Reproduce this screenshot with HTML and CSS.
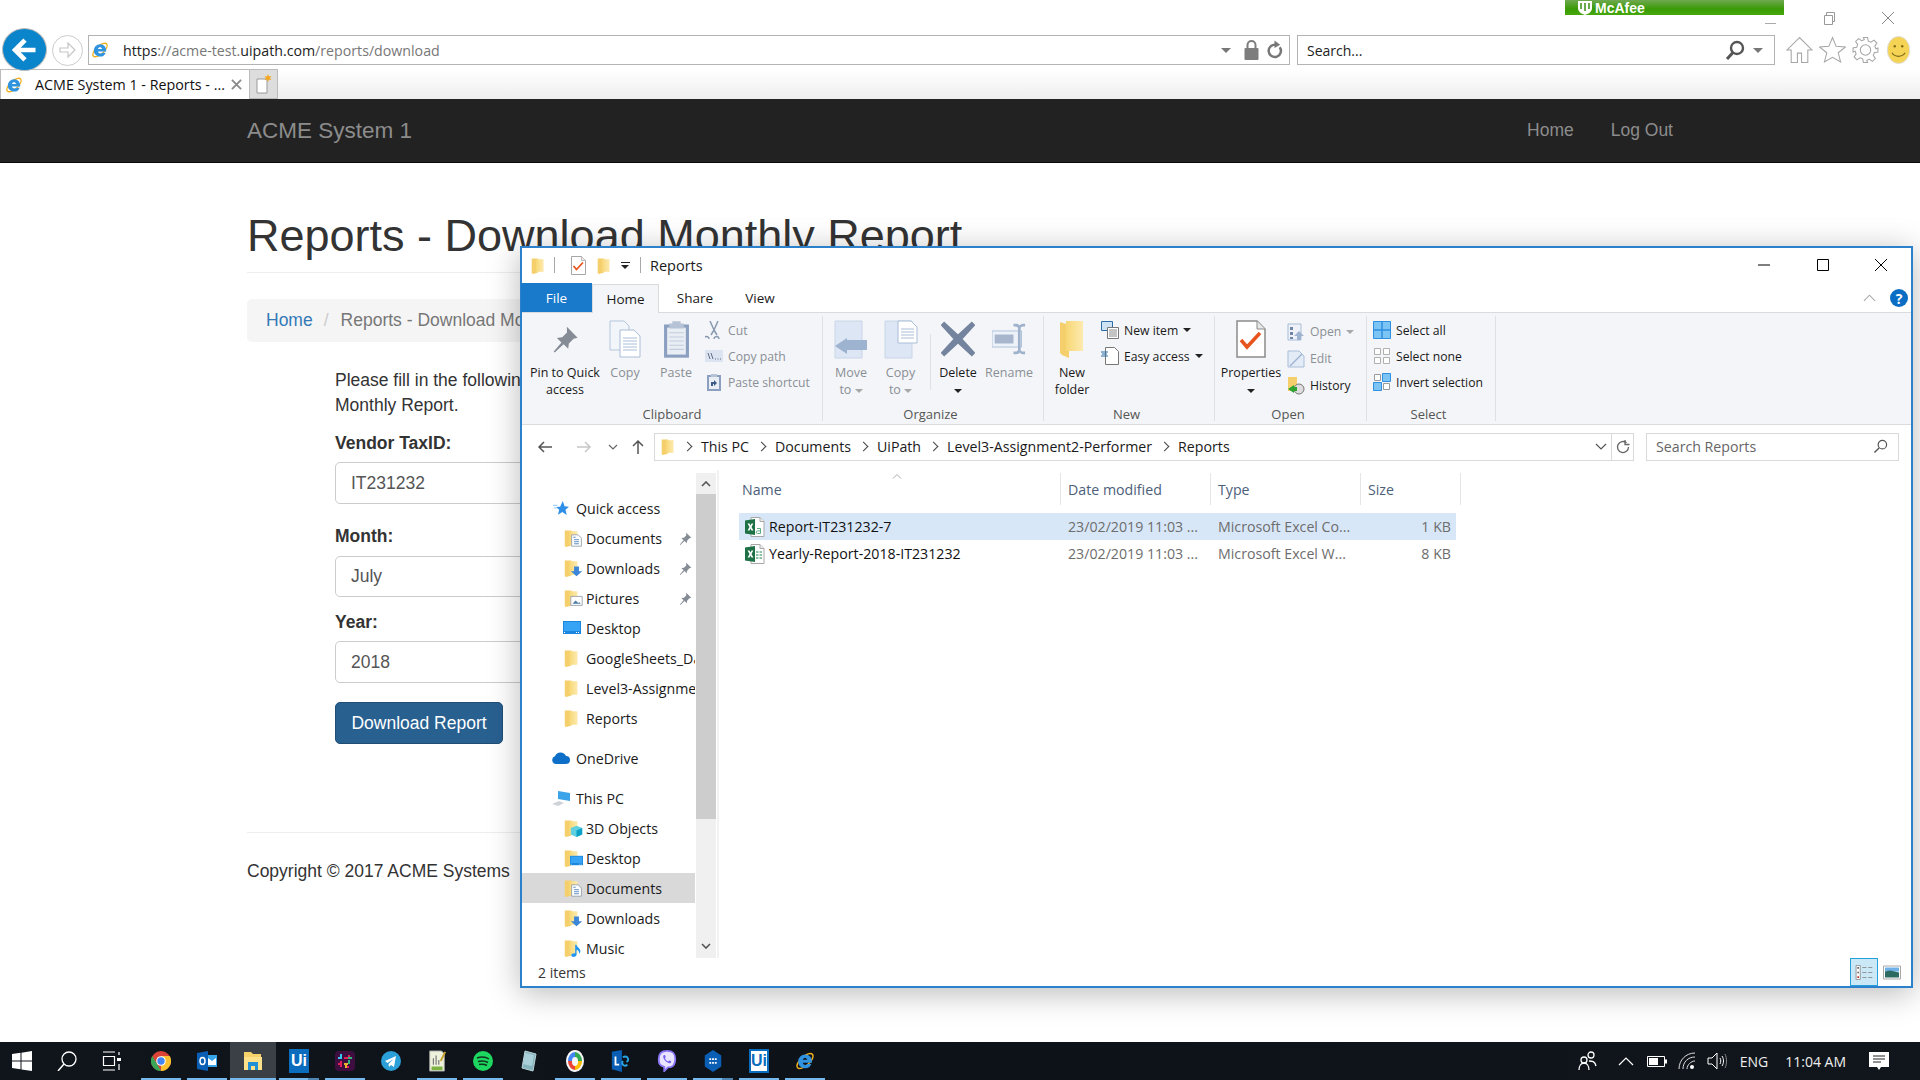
FILE: index.html
```html
<!DOCTYPE html>
<html lang="en">
<head>
<meta charset="utf-8">
<title>ACME System 1 - Reports</title>
<link rel="stylesheet" href="styles.css">
</head>
<body>
<svg class="defs" aria-hidden="true">
  <defs>
    <linearGradient id="fg" x1="0" x2="1" y1="0" y2="0"><stop offset="0" stop-color="#f7d774"/><stop offset="1" stop-color="#fdeab0"/></linearGradient>
    <symbol id="folder" viewBox="0 0 20 24"><path d="M1 2h9v20l-7 2-2-1z" fill="#f5cf6b"/><path d="M7 3h11v18H7z" fill="url(#fg)"/></symbol>
    <symbol id="ie" viewBox="0 0 20 20"><ellipse cx="10" cy="10" rx="10" ry="4.500" transform="rotate(-42 10 10)" fill="none" stroke="#f2b01e" stroke-width="1.400"/><path d="M10 3.500a6.800 6.800 0 0 0-6.800 6.800A6.800 6.800 0 0 0 16.300 13h-4c-.8 1.500-3.800 1.500-4.600-1.200h9.200C17.400 7 14.300 3.500 10 3.500zM7.800 8.800c.5-2.300 3.900-2.300 4.400 0z" fill="#2f93e0"/></symbol>
    <symbol id="pin" viewBox="0 0 20 20"><path d="M11 1l8 8-3 .8-3.500 3.500-.5 4-3.400-3.400L2 20l-.7-.7 5.700-6.700L3.600 9.200l4-.5L11.100 5.200z" fill="#858c95"/></symbol>
    <symbol id="xl1" viewBox="0 0 20 20"><path d="M6 .5h9l4 4v15H6z" fill="#fff" stroke="#a8a8a8"/><path d="M15 .5v4h4" fill="#eee" stroke="#a8a8a8"/><path d="M0 3.500L10 2v16L0 16.500z" fill="#1e7145"/><path d="M2.500 6.500h2l1 2 1-2h1.800L6.500 10l1.900 3.500H6.500l-1-2.100-1 2.100H2.600L4.500 10z" fill="#fff"/><path d="M12 11.500h3.500v5H12.500a1.300 1.300 0 0 1 0-2.600h3" fill="none" stroke="#5aa97f"/></symbol>
    <symbol id="xl2" viewBox="0 0 20 20"><path d="M6 .5h9l4 4v15H6z" fill="#fff" stroke="#a8a8a8"/><path d="M15 .5v4h4" fill="#eee" stroke="#a8a8a8"/><path d="M0 3.500L10 2v16L0 16.500z" fill="#1e7145"/><path d="M2.500 6.500h2l1 2 1-2h1.800L6.500 10l1.900 3.500H6.500l-1-2.100-1 2.100H2.600L4.500 10z" fill="#fff"/><path d="M11 7h2.500v2H11zM14.500 7H17v2h-2.500zM11 10h2.500v2H11zM14.500 10H17v2h-2.500zM11 13h2.500v2H11zM14.500 13H17v2h-2.500z" fill="#8dc4a4"/></symbol>
    <symbol id="pagecheck" viewBox="0 0 30 38"><path d="M1 1h20l8 8v28H1z" fill="#fff" stroke="#8a8a8a" stroke-width="1.500"/><path d="M21 1v8h8" fill="#e8e8e8" stroke="#8a8a8a"/><path d="M5 20l6 7 13-14" fill="none" stroke="#e8541e" stroke-width="3.500"/></symbol>
    <symbol id="doc" viewBox="0 0 16 16"><path d="M2 1h8l4 4v10H2z" fill="#fff" stroke="#8d98a6"/><path d="M5 7h6M5 9.500h6M5 12h6M4 4h3" stroke="#3f78b8"/></symbol>
    <symbol id="down" viewBox="0 0 16 16"><path d="M5 3h6v6h4l-7 6-7-6h4z" fill="#3b86d6"/></symbol>
    <symbol id="pict" viewBox="0 0 16 16"><path d="M1 3h14v11H1z" fill="#fff" stroke="#8d98a6"/><path d="M3 12l4-4 3 3 2-1 1 2z" fill="#4c7aa3"/></symbol>
    <symbol id="desk" viewBox="0 0 18 13"><path d="M0 0h18v13H0z" fill="#1a86de"/><path d="M1 1h16v9H1z" fill="#37a3f5"/><path d="M1 11h1v1H1zm14 0h1v1h-1zm-2 0h1v1h-1z" fill="#fff"/></symbol>
    <symbol id="cube" viewBox="0 0 16 16"><path d="M8 2l7 3v8l-7 3-7-3V5z" fill="#5fd0df"/><path d="M8 8l7-3v8l-7 3z" fill="#0aa1c8"/></symbol>
    <symbol id="note" viewBox="0 0 16 20"><path d="M6 1h2c.5 4 6 5 6 10 0 2-1 3-2 4 .5-3-1-5-4-6v8c0 2-3 3-5 3s-3-1.500-3-3 3-3 6-2.500z" fill="#2196f3"/></symbol>
    <symbol id="bigcopy" viewBox="0 0 32 38"><path d="M1 1h14l5 5v24H1z" fill="#f2f5fa" stroke="#b5c6dc"/><path d="M11 10h14l6 6v21H11z" fill="#fff" stroke="#a9bdd8"/><path d="M14 18h14M14 21h14M14 24h14M14 27h14M14 30h14" stroke="#a9bdd8"/></symbol>
    <symbol id="bigpaste" viewBox="0 0 26 38"><path d="M1 5h24v32H1z" fill="#8ba0c0"/><path d="M4 8h18v26H4z" fill="#e9edf4"/><path d="M9 2h8v2h3v5H6V4h3z" fill="#b6c3d6"/><path d="M6 13h14M6 17h14M6 21h14M6 25h14M6 29h14" stroke="#c3cddd"/></symbol>
    <symbol id="moveto" viewBox="0 0 34 38"><path d="M1 1h27v37H1z" fill="#dce6f4" stroke="#c8d6e8"/><path d="M11 20h22v10H11z" fill="#9db3d0" /><path d="M13 18v16L1 26z" fill="#9db3d0"/></symbol>
    <symbol id="copyto" viewBox="0 0 34 38"><path d="M1 1h27v37H1z" fill="#dce6f4" stroke="#c8d6e8"/><path d="M14 1h13l6 6v16H14z" fill="#fff" stroke="#a9bdd8"/><path d="M17 9h13M17 12h13M17 15h13M17 18h13" stroke="#a9bdd8"/></symbol>
    <symbol id="rename" viewBox="0 0 38 36"><path d="M0 9h33v18H0z" fill="#edf2f9" stroke="#a9bdd8"/><path d="M3 13h21v10H3z" fill="#a7b6cd"/><path d="M24 1h3c3 0 4 2 4 2s1-2 4-2h2v3h-2c-2 0-3 1-3 2v24c0 1 1 2 3 2h2v3h-2c-3 0-4-2-4-2s-1 2-4 2h-3v-3h2c2 0 3-1 3-2V6c0-1-1-2-3-2h-2z" fill="#9fb2cc"/></symbol>
    <symbol id="bigfolder" viewBox="0 0 24 38"><path d="M0 2l9 3v33l-7-3-2-2z" fill="#f5cf6b"/><path d="M6 1h17v30H6z" fill="url(#fg)"/></symbol>
    <symbol id="selall" viewBox="0 0 18 18"><path d="M.5.500h17v17H.500z" fill="#7cc4f4" stroke="#2f8fe0"/><path d="M9 0v18M0 9h18" stroke="#2f8fe0" stroke-width="1.500"/></symbol>
    <symbol id="selnone" viewBox="0 0 18 18"><path d="M1.500 1.500h6v6h-6zM10.500 1.500h6v6h-6zM1.500 10.500h6v6h-6zM10.500 10.500h6v6h-6z" fill="#fff" stroke="#b0b0b0"/></symbol>
    <symbol id="selinv" viewBox="0 0 18 18"><path d="M1.500 1.500h6v6h-6zM10.500 10.500h6v6h-6z" fill="#fff" stroke="#9a9a9a"/><path d="M9.500.500h8v8h-8zM.500 9.500h8v8h-8z" fill="#7cc4f4" stroke="#2f8fe0"/></symbol>
  </defs>
</svg>

<div class="screen">
  <header class="ie">
    <div class="ie-title">
      <div class="mcafee">
        <svg class="mcafee-shield" viewBox="0 0 14 14"><path d="M0 0h14v7c0 4-4 6-7 7-3-1-7-3-7-7z" fill="#fff"/><path d="M3 2v6M7 2v8M11 2v6" stroke="#3a8f12" stroke-width="1.500"/></svg>
        <span>McAfee</span>
      </div>
      <div class="ie-ctl">
        <svg class="ctl-i" viewBox="0 0 16 16"><path d="M3 13.500h11" stroke="#aaa" stroke-width="1"/></svg>
        <svg class="ctl-i" viewBox="0 0 16 16"><path d="M3.500 5.500h8v9h-8zM5.500 5V2.500h8v9h-2" fill="none" stroke="#999"/></svg>
        <svg class="ctl-i" viewBox="0 0 16 16"><path d="M2 2l12 12M14 2L2 14" stroke="#888" stroke-width="1"/></svg>
      </div>
    </div>
    <div class="ie-nav">
      <div class="back-btn"><svg viewBox="0 0 24 24"><path d="M3 12h18M12 3.500L3.500 12l8.500 8.500" fill="none" stroke="#fff" stroke-width="4"/></svg></div>
      <div class="fwd-btn"><svg viewBox="0 0 20 20"><path d="M2 8h8V3l7 7-7 7v-5H2z" fill="none" stroke="#c6c6c6" stroke-width="1.200"/></svg></div>
      <div class="addr">
        <svg class="i18 addr-ie"><use href="#ie"/></svg>
        <span class="url"><b>https</b>://acme-test.<b>uipath.com</b>/reports/download</span>
        <span class="caret-g"></span>
        <svg class="addr-lock" viewBox="0 0 14 20"><path d="M3 8V5a4 4 0 0 1 8 0v3" fill="none" stroke="#7d7d7d" stroke-width="2"/><rect y="8" width="14" height="12" rx="1" fill="#7d7d7d"/></svg>
        <svg class="addr-ref" viewBox="0 0 18 20"><path d="M14.500 7a6.500 6.500 0 1 1-4-2.500" fill="none" stroke="#777" stroke-width="2.600"/><path d="M9 0l6 4.500L9 8z" fill="#777"/></svg>
      </div>
      <div class="srch">
        <span class="srch-t">Search...</span>
        <svg class="srch-mag" viewBox="0 0 20 20"><circle cx="12" cy="8" r="6" fill="none" stroke="#555" stroke-width="2.400"/><path d="M8 12.500L2 19" stroke="#555" stroke-width="3"/></svg>
        <span class="caret-g"></span>
      </div>
      <div class="ie-tools">
        <svg class="tool" viewBox="0 0 26 26"><path d="M13 1L1 13h4v12h6v-9h4v9h6V13h4z" fill="none" stroke="#a5a5a5"/></svg>
        <svg class="tool" viewBox="0 0 26 26"><path d="M13 1l3.500 8.500 9 .6-7 5.600 2.300 8.800L13 20l-7.800 4.500 2.300-8.800-7-5.600 9-.6z" fill="none" stroke="#a5a5a5"/></svg>
        <svg class="tool" viewBox="0 0 26 26"><circle cx="13" cy="13" r="5" fill="none" stroke="#a5a5a5"/><path d="M11 1h4l.7 3.500 2.500 1 3-2 2.800 2.800-2 3 1 2.500L25 11v4l-3.500.7-1 2.500 2 3-2.800 2.800-3-2-2.500 1L15 25h-4l-.7-3.500-2.500-1-3 2-2.800-2.800 2-3-1-2.500L1 15v-4l3.500-.7 1-2.500-2-3 2.800-2.800 3 2 2.500-1z" fill="none" stroke="#a5a5a5"/></svg>
        <svg class="tool" viewBox="0 0 26 30"><ellipse cx="13" cy="15" rx="12" ry="14.500" fill="#f5d455" stroke="#ddd"/><circle cx="9" cy="11" r="1.300" fill="#7c6a1a"/><circle cx="17" cy="11" r="1.300" fill="#7c6a1a"/><path d="M6 18c3 5 11 5 14 0" fill="none" stroke="#7c6a1a" stroke-width="1.300"/></svg>
      </div>
    </div>
    <div class="ie-tabs">
      <div class="ie-tab">
        <svg class="i18"><use href="#ie"/></svg>
        <span class="ie-tab-t">ACME System 1 - Reports - ...</span>
        <svg class="ie-tab-x" viewBox="0 0 12 12"><path d="M1 1l10 10M11 1L1 11" stroke="#8a8a8a" stroke-width="2"/></svg>
      </div>
      <div class="ie-new"><svg viewBox="0 0 16 20"><path d="M1 5h10v14H1z" fill="#fff" stroke="#999"/><path d="M12 0l1 2.500 2.500-.5-1.500 2 1.500 2-2.500-.5-1 2.500-1-2.500-2.500.5 1.500-2-1.500-2 2.500.5z" fill="#f4a61d"/></svg></div>
    </div>
  </header>

  <nav class="navbar">
    <div class="brand">ACME System 1</div>
    <div class="nav-links"><a>Home</a><a>Log Out</a></div>
  </nav>

  <main class="page">
    <h1>Reports - Download Monthly Report</h1>
    <div class="crumb"><a>Home</a><i>/</i><span>Reports - Download Monthly Report</span></div>
    <form class="form">
      <p>Please fill in the following details to download the<br>Monthly Report.</p>
      <label class="l1">Vendor TaxID:</label>
      <div class="input h42 m7">IT231232</div>
      <label class="l2">Month:</label>
      <div class="input h41">July</div>
      <label class="l3">Year:</label>
      <div class="input h42 m7">2018</div>
      <div class="btn">Download Report</div>
    </form>
    <hr>
    <footer>Copyright © 2017 ACME Systems</footer>
  </main>

  <section class="win">
    <div class="w-title">
      <svg class="qa-f"><use href="#folder"/></svg>
      <span class="qa-sep"></span>
      <svg class="qa-c"><use href="#pagecheck"/></svg>
      <svg class="qa-f qa-f2"><use href="#folder"/></svg>
      <span class="qa-d"></span>
      <span class="qa-sep qa-sep2"></span>
      <span class="w-name">Reports</span>
      <div class="w-ctl">
        <svg viewBox="0 0 14 14"><path d="M1 7h12" stroke="#000" stroke-width="1"/></svg>
        <svg viewBox="0 0 14 14"><path d="M1.500 1.500h11v11h-11z" fill="none" stroke="#000" stroke-width="1"/></svg>
        <svg viewBox="0 0 14 14"><path d="M1 1l12 12M13 1L1 13" stroke="#000" stroke-width="1"/></svg>
      </div>
    </div>
    <div class="w-tabs">
      <span class="tab-file">File</span>
      <span class="tab-home">Home</span>
      <span class="tab-share">Share</span>
      <span class="tab-view">View</span>
      <svg class="rib-up" viewBox="0 0 14 8"><path d="M1 7l6-6 6 6" fill="none" stroke="#aaa" stroke-width="1.200"/></svg>
      <span class="help">?</span>
    </div>
    <div class="ribbon">
      <div class="grp g-clip">
        <div class="grp-body">
          <div class="big w70"><svg class="ic-pin"><use href="#pin"/></svg><span>Pin to Quick<br>access</span></div>
          <div class="big w50 dim"><svg class="ic30"><use href="#bigcopy"/></svg><span>Copy</span></div>
          <div class="big w52 dim"><svg class="ic26"><use href="#bigpaste"/></svg><span>Paste</span></div>
          <div class="smalls dim">
            <div class="sm"><svg viewBox="0 0 14 18"><path d="M3 0l4 9 4-9M2 18a2.500 2.500 0 1 1 0-.1zM12 18a2.500 2.500 0 1 1 0-.1zM7 9l-3 5M7 9l3 5" fill="none" stroke="#8a9ab0" stroke-width="1.500"/></svg>Cut</div>
            <div class="sm"><svg viewBox="0 0 18 12"><path d="M0 0h18v12H0z" fill="#dbe4f0"/><path d="M3 3l2 6M6 3l2 6M10 9h1M12.500 9h1M15 9h1" stroke="#5e6f85"/></svg>Copy path</div>
            <div class="sm"><svg viewBox="0 0 14 18"><path d="M0 2h14v16H0z" fill="#8ba0c0"/><path d="M2 4h10v12H2z" fill="#e9edf4"/><path d="M4 1h6v3H4z" fill="#b6c3d6"/><path d="M4 13V9h3V7l3 3-3 3v-2H6v2z" fill="#3c5c86"/></svg>Paste shortcut</div>
          </div>
        </div>
        <div class="grp-l">Clipboard</div>
      </div>
      <div class="grp g-org">
        <div class="grp-body">
          <div class="big w50 dim"><svg class="ic34"><use href="#moveto"/></svg><span>Move<br>to <em class="dn"></em></span></div>
          <div class="big w49 dim"><svg class="ic34"><use href="#copyto"/></svg><span>Copy<br>to <em class="dn"></em></span></div>
          <span class="vsep"></span>
          <div class="big w52"><svg class="ic34" viewBox="0 0 32 32"><path d="M3 1l13 12L29 1l2 2-12 13 12 13-2 2-13-12L3 31l-2-2 12-13L1 3z" fill="#74849f" stroke="#74849f" stroke-width="2"/></svg><span>Delete<br><em class="dn dk"></em></span></div>
          <div class="big w50 dim"><svg class="ic34"><use href="#rename"/></svg><span>Rename</span></div>
        </div>
        <div class="grp-l">Organize</div>
      </div>
      <div class="grp g-new">
        <div class="grp-body">
          <div class="big w48"><svg class="ic-fold"><use href="#bigfolder"/></svg><span>New<br>folder</span></div>
          <div class="smalls">
            <div class="sm"><svg viewBox="0 0 18 18"><path d="M.5.500h11v9H.500z" fill="#cfe2f3" stroke="#2b6ea8"/><path d="M6.500 6.500h11v11h-11z" fill="#fff" stroke="#777"/><path d="M8 9h8M8 11h8M8 13h8M8 15h8" stroke="#888"/></svg>New item <em class="dn dk"></em></div>
            <div class="sm"><svg viewBox="0 0 18 18"><path d="M4.500.500h9l4 4v13h-13z" fill="#fff" stroke="#777"/><path d="M0 5h7M1 7h5M0 9h7" stroke="#2b6ea8"/></svg>Easy access <em class="dn dk"></em></div>
          </div>
        </div>
        <div class="grp-l">New</div>
      </div>
      <div class="grp g-open">
        <div class="grp-body">
          <div class="big w64"><svg class="ic-chk"><use href="#pagecheck"/></svg><span>Properties<br><em class="dn dk"></em></span></div>
          <div class="smalls s-open">
            <div class="sm dim"><svg viewBox="0 0 18 18"><path d="M1 1h13v16H1z" fill="#eef2f8" stroke="#a9bdd8"/><path d="M3 4h3v3H3zM3 9h3v3H3zM3 14h3v2H3z" fill="#6f86a6"/><path d="M12 8l5 5h-3v4h-4v-4H7z" fill="#9db3d0"/></svg>Open <em class="dn"></em></div>
            <div class="sm dim"><svg viewBox="0 0 18 18"><path d="M1 1h11l5 5v11H1z" fill="#e3ebf6" stroke="#a9bdd8"/><path d="M3 16L15 4" stroke="#9db3d0" stroke-width="1.500"/></svg>Edit</div>
            <div class="sm"><svg viewBox="0 0 18 18"><path d="M1 0h9v14H1z" fill="#f5cf6b"/><circle cx="12" cy="12" r="5" fill="#ddd" stroke="#777"/><path d="M1 12l6-4v2h3v4H7v2z" fill="#2fa32f"/></svg>History</div>
          </div>
        </div>
        <div class="grp-l">Open</div>
      </div>
      <div class="grp g-sel">
        <div class="grp-body">
          <div class="smalls">
            <div class="sm"><svg viewBox="0 0 18 18"><use href="#selall"/></svg>Select all</div>
            <div class="sm"><svg viewBox="0 0 18 18"><use href="#selnone"/></svg>Select none</div>
            <div class="sm"><svg viewBox="0 0 18 18"><use href="#selinv"/></svg>Invert selection</div>
          </div>
        </div>
        <div class="grp-l">Select</div>
      </div>
    </div>
    <div class="w-addr">
      <svg class="nv n1" viewBox="0 0 16 14"><path d="M15 7H2M7 2L2 7l5 5" fill="none" stroke="#555" stroke-width="1.500"/></svg>
      <svg class="nv n2" viewBox="0 0 16 14"><path d="M1 7h13M9 2l5 5-5 5" fill="none" stroke="#c8c8c8" stroke-width="1.500"/></svg>
      <svg class="nv n3" viewBox="0 0 10 6"><path d="M1 1l4 4 4-4" fill="none" stroke="#666" stroke-width="1.200"/></svg>
      <svg class="nv n4" viewBox="0 0 14 16"><path d="M7 15V2M2 7l5-5 5 5" fill="none" stroke="#555" stroke-width="1.500"/></svg>
      <div class="path">
        <svg class="pf"><use href="#folder"/></svg>
        <span class="cv"></span><span>This PC</span>
        <span class="cv"></span><span>Documents</span>
        <span class="cv"></span><span>UiPath</span>
        <span class="cv"></span><span>Level3-Assignment2-Performer</span>
        <span class="cv"></span><span>Reports</span>
        <svg class="path-dd" viewBox="0 0 12 7"><path d="M1 1l5 5 5-5" fill="none" stroke="#555" stroke-width="1.200"/></svg>
        <span class="path-ref"><svg viewBox="0 0 16 16"><path d="M13.500 8a5.500 5.500 0 1 1-2-4.200" fill="none" stroke="#666" stroke-width="1.300"/><path d="M10 1v4.500h4.500" fill="none" stroke="#666" stroke-width="1.300"/></svg></span>
      </div>
      <div class="w-srch"><span>Search Reports</span><svg viewBox="0 0 16 16"><circle cx="10" cy="6" r="4.500" fill="none" stroke="#555" stroke-width="1.300"/><path d="M6.500 9.500L1.500 14.500" stroke="#555" stroke-width="1.500"/></svg></div>
    </div>
    <div class="w-body">
      <aside class="tree">
        <div class="rows">
          <div class="r top"><svg class="ti" viewBox="0 0 18 18"><path d="M11 1l2 6 5 .5-4 3.500 1.500 6-5-3.500-5 3L7 11 3.500 8l4.500-.500z" fill="#2f8fe8"/><path d="M0 6h5M1 9h3" stroke="#7fc0f4"/></svg>Quick access</div>
          <div class="r"><span class="fi"><svg class="f"><use href="#folder"/></svg><svg class="o"><use href="#doc"/></svg></span>Documents<svg class="rp"><use href="#pin"/></svg></div>
          <div class="r"><span class="fi"><svg class="f"><use href="#folder"/></svg><svg class="o"><use href="#down"/></svg></span>Downloads<svg class="rp"><use href="#pin"/></svg></div>
          <div class="r"><span class="fi"><svg class="f"><use href="#folder"/></svg><svg class="o"><use href="#pict"/></svg></span>Pictures<svg class="rp"><use href="#pin"/></svg></div>
          <div class="r"><span class="fi"><svg class="dsk"><use href="#desk"/></svg></span>Desktop</div>
          <div class="r"><span class="fi"><svg class="f"><use href="#folder"/></svg></span>GoogleSheets_Data</div>
          <div class="r"><span class="fi"><svg class="f"><use href="#folder"/></svg></span>Level3-Assignment2</div>
          <div class="r"><span class="fi"><svg class="f"><use href="#folder"/></svg></span>Reports</div>
          <div class="r top gap"><svg class="ti" viewBox="0 0 18 12"><path d="M4 12a4 4 0 0 1-1-7.800A6 6 0 0 1 14 4a4 4 0 0 1 0 8z" fill="#0e6fc8"/></svg>OneDrive</div>
          <div class="r top gap"><svg class="ti" viewBox="0 0 18 16"><path d="M6 1l12 2v8L6 9z" fill="#3ba3ea"/><path d="M0 14l7-3 5 2-6 3z" fill="#cfd3d8"/></svg>This PC</div>
          <div class="r"><span class="fi"><svg class="f"><use href="#folder"/></svg><svg class="o"><use href="#cube"/></svg></span>3D Objects</div>
          <div class="r"><span class="fi"><svg class="f"><use href="#folder"/></svg><svg class="o"><use href="#desk"/></svg></span>Desktop</div>
          <div class="r sel"><span class="fi"><svg class="f"><use href="#folder"/></svg><svg class="o"><use href="#doc"/></svg></span>Documents</div>
          <div class="r"><span class="fi"><svg class="f"><use href="#folder"/></svg><svg class="o"><use href="#down"/></svg></span>Downloads</div>
          <div class="r"><span class="fi"><svg class="f"><use href="#folder"/></svg><svg class="o"><use href="#note"/></svg></span>Music</div>
        </div>
        <div class="sbar">
          <div class="sb-up"><svg viewBox="0 0 10 6"><path d="M1 5l4-4 4 4" fill="none" stroke="#555" stroke-width="1.600"/></svg></div>
          <div class="sb-th"></div>
          <div class="sb-dn"><svg viewBox="0 0 10 6"><path d="M1 1l4 4 4-4" fill="none" stroke="#555" stroke-width="1.600"/></svg></div>
        </div>
      </aside>
      <div class="list">
        <div class="hdr">
          <span class="c1">Name<svg class="sort" viewBox="0 0 10 5"><path d="M1 4.500L5 .5l4 4" fill="none" stroke="#aaa"/></svg></span>
          <span class="c2">Date modified</span>
          <span class="c3">Type</span>
          <span class="c4">Size</span>
        </div>
        <div class="row on">
          <span class="n"><svg class="xi"><use href="#xl1"/></svg><b>Report-IT231232-7</b></span>
          <span class="d">23/02/2019 11:03 ...</span>
          <span class="t">Microsoft Excel Co...</span>
          <span class="s">1 KB</span>
        </div>
        <div class="row">
          <span class="n"><svg class="xi"><use href="#xl2"/></svg><b>Yearly-Report-2018-IT231232</b></span>
          <span class="d">23/02/2019 11:03 ...</span>
          <span class="t">Microsoft Excel W...</span>
          <span class="s">8 KB</span>
        </div>
      </div>
    </div>
    <div class="w-status">
      <span>2 items</span>
      <div class="views">
        <span class="v on"><svg viewBox="0 0 20 18"><path d="M.5.500h5v17h-5z" fill="#fff" stroke="#888"/><path d="M2 2.500h2v2H2zM2 8h2v2H2z" fill="#666"/><path d="M2 13.500h2v2H2z" fill="#c0392b"/><path d="M8 3h5M15 3h5M8 9h5M15 9h5M8 15h5M15 15h5" stroke="#888"/></svg></span>
        <span class="v"><svg viewBox="0 0 18 14"><path d="M.5.500h17v13H.500z" fill="#fff" stroke="#a8a8a8"/><path d="M2 2h14v4H2z" fill="#6fb0e8"/><path d="M2 6l5-1 5 1 4 1v5H2z" fill="#2d6b62"/></svg></span>
      </div>
    </div>
  </section>

  <footer class="taskbar">
    <div class="tb-left">
      <span class="tb"><svg viewBox="0 0 20 20"><path d="M0 3l8.500-1.200V9.500H0zM9.500 1.700L20 0v9.500H9.500zM0 10.500h8.500v7.700L0 17zM9.500 10.500H20V20L9.500 18.400z" fill="#fff"/></svg></span>
      <span class="tb"><svg viewBox="0 0 20 20"><circle cx="12" cy="8" r="7" fill="none" stroke="#fff" stroke-width="1.300"/><path d="M7 13l-6 7" stroke="#fff" stroke-width="1.500"/></svg></span>
      <span class="tb"><svg viewBox="0 0 20 20"><path d="M1 1h12M1 19h12M1.500 5.500h11v9h-11zM17 1v3M17 7v3M17 13v6" fill="none" stroke="#fff" stroke-width="1.200"/><rect x="15" y="7" width="4" height="3" fill="#fff"/></svg></span>
      <span class="tb app run"><svg viewBox="0 0 20 20"><circle cx="10" cy="10" r="10" fill="#db4437"/><path d="M10 20a10 10 0 0 0 8.700-15H10z" fill="#fbc02d"/><path d="M1.300 5L6 13l4 7A10 10 0 0 1 1.300 5z" fill="#3aa757"/><circle cx="10" cy="10" r="4.800" fill="#fff"/><circle cx="10" cy="10" r="3.700" fill="#4285f4"/></svg></span>
      <span class="tb app run"><svg viewBox="0 0 20 20"><path d="M9 4h11v12H9z" fill="#37a3e8"/><path d="M11 7l4 3 4-3v7h-8z" fill="#fff"/><path d="M0 2l11-2v20L0 18z" fill="#0a5fb4"/><ellipse cx="5.500" cy="10" rx="2.500" ry="3.500" fill="none" stroke="#fff" stroke-width="1.500"/></svg></span>
      <span class="tb app run act"><svg viewBox="0 0 20 20"><path d="M1 1h7l2 2h8v5H1z" fill="#f6d16a"/><path d="M1 6h18v13H1z" fill="#fde08a"/><path d="M5 11h10v8h-3v-4H8v4H5z" fill="#1f8fd6"/></svg></span>
      <span class="tb app run st"><span class="ui ui-b">Ui</span></span>
      <span class="tb app run"><svg viewBox="0 0 20 20"><rect width="20" height="20" rx="4" fill="#3f0e40"/><path d="M6 3v4M14 9v4M3 13h4M9 7h4M6 10v6M14 4v3M3 7h3M11 16h3" stroke="#e01e5a" stroke-width="2"/><path d="M14 9v4M13 7h4" stroke="#2eb67d" stroke-width="2"/><path d="M9 13h4M11 13v4" stroke="#ecb22e" stroke-width="2"/><path d="M6 3v3M3 7h4" stroke="#36c5f0" stroke-width="2"/></svg></span>
      <span class="tb app"><svg viewBox="0 0 20 20"><circle cx="10" cy="10" r="10" fill="#2a9fd8"/><path d="M4 10l11-5-2 11-3-2-2 2-.5-3 5-5-6 4z" fill="#fff"/></svg></span>
      <span class="tb app run"><svg viewBox="0 0 20 24"><path d="M2 1h13l3 3v19H2z" fill="#eef2dc" stroke="#999"/><path d="M4 18h12v4H4z" fill="#7cb342"/><path d="M6 16V9M9 16V6M12 16v-5" stroke="#555"/><path d="M14 12L19 2" stroke="#c6a02a" stroke-width="2"/></svg></span>
      <span class="tb app run"><svg viewBox="0 0 20 20"><circle cx="10" cy="10" r="10" fill="#1ed760"/><path d="M4 7c4-1.500 9-1 12 1M5 10.500c3.500-1 7-.7 10 1M6 13.500c3-.7 5.500-.5 8 1" fill="none" stroke="#10331c" stroke-width="1.500"/></svg></span>
      <span class="tb app"><svg viewBox="0 0 20 22"><path d="M6 1l11 3-3 17-11-3z" fill="#86b4bd" stroke="#b9d3d9"/><path d="M6 3l9 2-2 11-9-2z" fill="#a9d0d8"/></svg></span>
      <span class="tb app run"><svg viewBox="0 0 20 22"><ellipse cx="10" cy="11" rx="9" ry="11" fill="#f6f6f6"/><path d="M10 2a7 9 0 0 1 7 9h-4a3 4 0 0 0-3-4z" fill="#34a853"/><path d="M17 11a7 9 0 0 1-7 9v-4a3 4 0 0 0 3-5z" fill="#fbbc04"/><path d="M10 20a7 9 0 0 1-7-9h4a3 4 0 0 0 3 5z" fill="#ea4335"/><path d="M3 11a7 9 0 0 1 7-9v5a3 4 0 0 0-3 4z" fill="#4285f4"/></svg></span>
      <span class="tb app run"><svg viewBox="0 0 20 24"><path d="M0 2l11-2v24L0 21z" fill="#0a5fb4"/><path d="M3 7h2v8h3v2H3z" fill="#fff"/><path d="M12 8c5-3 8 3 4 5M17 16c-4 3-7-1-5-4" fill="none" stroke="#28a8ea" stroke-width="2"/></svg></span>
      <span class="tb app run"><svg viewBox="0 0 20 24"><path d="M10 1c7 0 9 3 9 9s-2 9-8 9l-4 4v-4.500C2 17 1 15 1 10s2-9 9-9z" fill="#e9e4ff" stroke="#8a75f5" stroke-width="2"/><path d="M6 6c1-1 2-1 2.500 1 .3 1-1 1.500-.5 2.500s2 2.500 3 2.700c1 0 1-1.200 2-.8 2 .6 2 2 .8 2.800-2 1.300-9-3.500-7.800-8.200z" fill="#7360f2"/></svg></span>
      <span class="tb app run st"><svg viewBox="0 0 20 24"><path d="M10 0l9 6v12l-9 6-9-6V6z" fill="#0a5fb4"/><path d="M6 9h2v2H6zM9 9h2v2H9zM12 9h2v2h-2zM6 13h2v2H6zM9 13h2v2H9zM12 13h2v2h-2z" fill="#fff"/></svg></span>
      <span class="tb app run"><span class="ui ui-w">Ui</span></span>
      <span class="tb app run"><svg viewBox="0 0 20 20"><use href="#ie"/></svg></span>
    </div>
    <div class="tray">
      <svg class="ty t-ppl" viewBox="0 0 20 20"><circle cx="13" cy="4" r="3" fill="none" stroke="#fff" stroke-width="1.300"/><circle cx="6" cy="9" r="3" fill="none" stroke="#fff" stroke-width="1.300"/><path d="M1 19c0-4 2-7 5-7s5 3 5 7M11 10c3 0 6 0 7 5" fill="none" stroke="#fff" stroke-width="1.300"/></svg>
      <svg class="ty t-chev" viewBox="0 0 16 9"><path d="M1 8l7-7 7 7" fill="none" stroke="#fff" stroke-width="1.200"/></svg>
      <svg class="ty t-bat" viewBox="0 0 20 11"><path d="M.5.500h17v10h-17z" fill="none" stroke="#fff"/><rect x="2" y="2" width="9" height="7" fill="#fff"/><rect x="18" y="3.500" width="2" height="4" fill="#fff"/></svg>
      <svg class="ty t-wifi" viewBox="0 0 18 18"><path d="M1 17C1 8 8 1 17 1M5 17C5 10 10 5 17 5M9 17c0-4 4-8 8-8" fill="none" stroke="#ddd"/><circle cx="14" cy="15" r="2" fill="#fff"/></svg>
      <svg class="ty t-vol" viewBox="0 0 20 18"><path d="M1 6h4l5-5v16l-5-5H1z" fill="none" stroke="#fff"/><path d="M13 6c1 2 1 4 0 6M15 4c2 3 2 7 0 10" fill="none" stroke="#fff"/><path d="M18 2c2 4 2 10 0 14" fill="none" stroke="#888"/></svg>
      <span class="eng">ENG</span>
      <span class="time">11:04 AM</span>
      <svg class="ty t-note" viewBox="0 0 20 18"><path d="M0 0h20v15h-8l-2 3-2-3H0z" fill="#fff"/><path d="M4 4h12M4 7h12M4 10h8" stroke="#222" stroke-width="1"/></svg>
    </div>
  </footer>
</div>
</body>
</html>
```

FILE: styles.css
```css
* { box-sizing: border-box; }
html, body { margin: 0; padding: 0; height: 100%; background: #fff; }
body { overflow: hidden; font-family: "Liberation Sans", Arial, sans-serif; color: #333; }
svg { display: block; flex: none; }
em { font-style: normal; }
.defs { position: absolute; width: 0; height: 0; }
.screen { position: relative; width: 1920px; height: 1080px; display: flex; flex-direction: column; overflow: hidden; }

/* IE chrome */
.ie { height: 99px; flex: none; position: relative; font-family: "Open Sans", "Noto Sans", sans-serif; }
.ie-title { height: 35px; display: flex; justify-content: flex-end; }
.mcafee { width: 219px; height: 15px; margin-right: 11px; background: linear-gradient(#6fa850, #3a9b06 60%, #46a80d); display: flex; align-items: center; padding-left: 13px; gap: 3px; color: #fff; font: bold 14px "Liberation Sans", sans-serif; overflow: hidden; }
.mcafee-shield { width: 14px; height: 14px; }
.ie-ctl { display: flex; gap: 43px; padding: 10px 24px 0 0; margin-left: -33px; }
.ctl-i { width: 16px; height: 16px; }
.ie-nav { height: 34px; display: flex; align-items: center; padding-left: 52px; padding-bottom: 4px; }
.back-btn { position: absolute; left: 2px; top: 28px; width: 45px; height: 43px; border-radius: 50%; background: #0a84ca; border: 1px solid #bcbcbc; display: flex; align-items: center; justify-content: center; }
.back-btn svg { width: 28px; height: 28px; }
.fwd-btn { width: 31px; height: 31px; border-radius: 50%; border: 1px solid #ccc; display: flex; align-items: center; justify-content: center; margin-right: 5px; }
.fwd-btn svg { width: 20px; height: 20px; }
.addr { width: 1202px; height: 30px; border: 1px solid #b3b3b3; display: flex; align-items: center; padding-left: 2px; font-size: 14.200px; }
.i18 { width: 18px; height: 18px; }
.addr-ie { margin-right: 14px; }
.url { color: #777; flex: 1; }
.url b { font-weight: 400; color: #222; }
.caret-g { width: 0; height: 0; border-left: 5px solid transparent; border-right: 5px solid transparent; border-top: 5px solid #777; flex: none; }
.addr-lock { width: 15px; height: 20px; margin: 0 7px 0 13px; }
.addr-ref { width: 17px; height: 20px; margin-right: 6px; }
.srch { width: 478px; height: 30px; margin-left: 7px; border: 1px solid #b3b3b3; display: flex; align-items: center; padding-left: 9px; font-size: 14px; color: #222; }
.srch-t { flex: 1; }
.srch-mag { width: 20px; height: 20px; margin-right: 8px; }
.srch .caret-g { margin-right: 11px; }
.ie-tools { display: flex; align-items: center; gap: 6px; margin-left: 11px; }
.tool { width: 27px; height: 28px; }
.ie-tabs { height: 30px; display: flex; background: linear-gradient(#fff, #eee); }
.ie-tab { width: 250px; height: 30px; background: #fff; border: 1px solid #bbb; border-bottom: 0; display: flex; align-items: center; padding-left: 4px; font-size: 14.300px; color: #111; }
.ie-tab-t { margin-left: 12px; flex: 1; white-space: nowrap; }
.ie-tab-x { width: 11px; height: 11px; margin-right: 7px; }
.ie-new { width: 28px; height: 30px; background: #ddd; border: 1px solid #bbb; border-left: 0; display: flex; align-items: center; justify-content: center; }
.ie-new svg { width: 16px; height: 20px; }

/* Navbar */
.navbar { height: 64px; flex: none; background: #222; border-bottom: 1px solid #080808; display: flex; align-items: center; justify-content: space-between; padding: 0 247px 0 247px; }
.brand { font-size: 22.500px; color: #8c8c8c; }
.nav-links { display: flex; gap: 37px; font-size: 17.500px; color: #8c8c8c; }

/* Page */
.page { flex: 1; padding: 49px 0 0 247px; font-size: 17.500px; }
h1 { margin: 0; width: 1424px; font-size: 45px; font-weight: 400; line-height: 47px; padding-bottom: 13px; border-bottom: 1px solid #eee; color: #333; }
.crumb { margin-top: 26px; width: 1424px; height: 43px; background: #f5f5f5; border-radius: 5px; display: flex; align-items: center; padding-left: 19px; color: #777; }
.crumb a { color: #337ab7; }
.crumb i { font-style: normal; color: #ccc; margin: 0 12px 0 11px; }
.form { margin: 26px 0 0 88px; width: 600px; display: flex; flex-direction: column; align-items: flex-start; }
.form p { margin: 0; line-height: 25px; white-space: nowrap; }
.form label { font-weight: 700; line-height: 24px; }
.l1 { margin-top: 13px; }
.l2 { margin-top: 20px; }
.l3 { margin-top: 13px; }
.input { width: 100%; margin-top: 8px; border: 1px solid #ccc; border-radius: 5px; padding-left: 15px; display: flex; align-items: center; color: #555; }
.m7 { margin-top: 7px; }
.h42 { height: 42px; }
.h41 { height: 41px; }
.btn { margin-top: 19px; width: 168px; height: 42px; background: #286090; border: 1px solid #204d74; border-radius: 5px; color: #fff; display: flex; align-items: center; justify-content: center; }
.page hr { margin: 88px 0 0; width: 1424px; border: 0; border-top: 1px solid #eee; }
.page footer { margin-top: 26px; line-height: 24px; }

/* Explorer window */
.win { position: absolute; left: 520px; top: 246px; width: 1393px; height: 742px; background: #fff; border: 2px solid #2b81cc; box-shadow: 0 5px 30px rgba(0,0,0,.28); display: flex; flex-direction: column; font-family: "Open Sans", "Noto Sans", sans-serif; font-size: 13.500px; color: #1a1a1a; }
.w-title { height: 36px; flex: none; display: flex; align-items: center; padding-bottom: 2px; }
.qa-f { width: 14px; height: 17px; margin-left: 9px; }
.qa-f2 { margin-left: 11px; }
.qa-sep { width: 1px; height: 16px; background: #a8a8a8; margin-left: 9px; }
.qa-sep2 { margin-left: 10px; }
.qa-c { width: 15px; height: 19px; margin-left: 16px; }
.qa-d { width: 9px; height: 6px; margin-left: 10px; border-top: 1px solid #222; position: relative; }
.qa-d::after { content: ""; position: absolute; left: 0; top: 2px; border-left: 4.500px solid transparent; border-right: 4.500px solid transparent; border-top: 4px solid #222; }
.w-name { margin-left: 9px; font-size: 14.500px; }
.w-ctl { margin-left: auto; display: flex; gap: 44.500px; padding-right: 23px; }
.w-ctl svg { width: 14px; height: 14px; }
.w-tabs { height: 29px; flex: none; display: flex; align-items: flex-end; font-size: 13.500px; border-bottom: 1px solid #dadbdc; position: relative; }
.w-tabs > span { height: 29px; display: flex; align-items: center; justify-content: center; }
.tab-file { width: 71px; background: #1979ca; color: #fff; margin-left: -1px; }
.tab-home { width: 67px; background: #f4f5f8; border: 1px solid #dadbdc; border-bottom: 0; height: 29px; margin-bottom: -1px; }
.tab-share { width: 72px; }
.tab-view { width: 58px; }
.rib-up { width: 13px; height: 8px; margin: 0 1px 10px auto; }
.w-tabs > .help { width: 18px; height: 18px; margin: 0 3px 5px 13px; border-radius: 50%; background: #0a6fc4; color: #fff; font-weight: 700; font-size: 14px; }
.ribbon { height: 112px; flex: none; display: flex; background: #f4f5f8; border-bottom: 1px solid #dadbdc; padding: 3px 0; }
.grp { display: flex; flex-direction: column; border-right: 1px solid #dfe0e2; }
.grp-body { flex: 1; display: flex; min-height: 0; }
.grp-l { height: 14px; text-align: center; font-size: 13px; color: #555; line-height: 14px; }
.g-org .grp-l, .g-new .grp-l, .g-open .grp-l, .g-sel .grp-l { padding-right: 5px; }
.g-clip { width: 301px; }
.g-org { width: 221px; }
.g-new { width: 171px; }
.g-open { width: 152px; }
.g-sel { width: 129px; }
.g-clip .grp-body { padding-left: 8px; }
.g-org .grp-body { padding-left: 3px; }
.g-new .grp-body { padding-left: 4px; }
.g-open .grp-body { padding-left: 4px; }
.g-sel .grp-body { padding-left: 1px; }
.big { display: flex; flex-direction: column; align-items: center; text-align: center; font-size: 12.500px; line-height: 17px; white-space: nowrap; }
.big > svg { height: 42px; margin-top: 2px; margin-bottom: 4px; }
.big > span { display: block; }
.w70 { width: 70px; }
.w50 { width: 50px; }
.w52 { width: 52px; }
.w49 { width: 49px; }
.w48 { width: 48px; }
.w64 { width: 64px; }
.ic-pin { width: 27px; }
.ic30 { width: 32px; }
.ic26 { width: 27px; }
.ic34 { width: 34px; }
.ic-fold { width: 24px; }
.ic-chk { width: 30px; }
.dim { color: #8a8f96; }
.dn { display: inline-block; width: 0; height: 0; border-left: 4px solid transparent; border-right: 4px solid transparent; border-top: 4px solid #a8a8a8; vertical-align: middle; }
.dn.dk { border-top-color: #222; }
.vsep { width: 1px; height: 56px; background: #dfe0e2; margin: 18px 1px 0 5px; }
.smalls { display: flex; flex-direction: column; padding: 1px 0 0 3px; font-size: 12.200px; white-space: nowrap; }
.sm { height: 26px; display: flex; align-items: center; gap: 5px; }
.sm > svg { width: 18px; height: 18px; }
.s-open { padding-top: 2px; padding-left: 4px; }
.s-open .sm { height: 27px; }
.g-new .smalls { padding-left: 5px; }
.g-sel .smalls { padding-left: 5px; }
.w-addr { height: 45px; flex: none; display: flex; align-items: center; position: relative; padding: 0 0 2px 15px; }
.nv { height: 14px; }
.n1 { width: 16px; }
.n2 { width: 16px; margin-left: 23px; }
.n3 { width: 10px; height: 6px; margin-left: 16px; }
.n4 { width: 14px; height: 16px; margin-left: 13px; }
.path { width: 980px; height: 28px; margin-left: 9px; border: 1px solid #d9d9d9; display: flex; align-items: center; padding-left: 6px; font-size: 14.200px; }
.pf { width: 14px; height: 17px; }
.path > span { white-space: nowrap; }
.cv { width: 21px; height: 8px; margin: 0 2px 0 3px; position: relative; }
.cv::after { content: ""; position: absolute; left: 6px; top: 0; width: 6px; height: 6px; border-top: 1px solid #444; border-right: 1px solid #444; transform: rotate(45deg); }
.path-dd { width: 12px; height: 7px; margin-left: auto; }
.path > .path-ref { width: 22px; height: 100%; border-left: 1px solid #d9d9d9; margin-left: 4px; display: flex; align-items: center; justify-content: center; }
.path-ref svg { width: 16px; height: 16px; }
.w-srch { width: 253px; height: 28px; margin-left: 12px; border: 1px solid #d9d9d9; display: flex; align-items: center; justify-content: space-between; padding: 0 10px 0 9px; font-size: 14.200px; color: #666; }
.w-srch svg { width: 15px; height: 15px; }
.w-body { flex: 1; display: flex; min-height: 0; }
.tree { width: 197px; flex: none; display: flex; border-right: 2px solid #f2f2f2; }
.rows { width: 173px; flex: none; padding-top: 23px; overflow: hidden; font-size: 14.200px; }
.r { height: 30px; display: flex; align-items: center; padding-left: 64px; position: relative; white-space: nowrap; overflow: hidden; }
.r.top { padding-left: 30px; }
.r.gap { margin-top: 10px; }
.r.sel { background: #d9d9d9; }
.ti { width: 18px; height: 16px; margin-right: 6px; }
.fi { position: absolute; left: 41px; top: 5px; width: 20px; height: 20px; }
.f { position: absolute; left: 1px; top: 1px; width: 15px; height: 18px; }
.o { position: absolute; right: 0; bottom: 1px; width: 13px; height: 13px; }
.dsk { position: absolute; left: 0; top: 3px; width: 18px; height: 13px; }
.rp { position: absolute; left: 157px; top: 9px; width: 13px; height: 13px; }
.sbar { width: 20px; flex: none; margin-left: 1px; background: #f0f0f0; display: flex; flex-direction: column; margin-top: 3px; }
.sb-up { height: 21px; display: flex; align-items: center; justify-content: center; }
.sb-up svg, .sb-dn svg { width: 10px; height: 6px; }
.sb-th { height: 325px; background: #cdcdcd; }
.sb-dn { margin-top: auto; height: 24px; display: flex; align-items: center; justify-content: center; }
.list { flex: 1; padding-top: 3px; padding-left: 20px; font-size: 14.200px; }
.hdr { height: 40px; width: 722px; display: grid; grid-template-columns: 322px 150px 150px 100px; }
.hdr > span { height: 32px; display: flex; align-items: center; padding-left: 7px; border-right: 1px solid #e5e5e5; color: #4c607a; position: relative; }
.hdr > .c1 { padding-left: 3px; }
.sort { position: absolute; left: 153px; top: 1px; width: 10px; height: 5px; }
.row { height: 27px; width: 717px; display: grid; grid-template-columns: 325px 150px 150px 92px; align-items: center; color: #6d6d6d; }
.row.on { background: #d8e7f8; }
.n { display: flex; align-items: center; color: #111; padding-left: 6px; }
.n b { font-weight: 400; margin-left: 4px; }
.xi { width: 20px; height: 20px; }
.d, .t { padding-left: 4px; white-space: nowrap; }
.s { text-align: right; padding-right: 5px; }
.w-status { height: 28px; flex: none; display: flex; align-items: center; justify-content: space-between; padding-left: 16px; font-size: 14px; color: #333; }
.views { display: flex; align-items: center; padding-right: 5px; }
.v { width: 28px; height: 28px; display: flex; align-items: center; justify-content: center; }
.v.on { background: #cbe8f6; border: 1px solid #26a0da; }
.v svg { width: 18px; height: 15px; }

/* Taskbar */
.taskbar { height: 38px; flex: none; background: linear-gradient(90deg, #10151c, #0d1218 50%, #11161c); display: flex; justify-content: space-between; position: relative; }
.tb-left { display: flex; }
.tb { width: 46px; height: 38px; display: flex; align-items: center; justify-content: center; position: relative; }
.tb:first-child { width: 44px; }
.tb > svg { width: 20px; height: 20px; }
.tb:nth-child(3) { width: 48px; padding-right: 4px; }
.app > svg { height: 22px; }
.run::after { content: ""; position: absolute; left: 3px; right: 3px; bottom: 0; height: 2px; background: #76b9ed; }
.act { background: #3b4047; }
.act::after { left: 0; right: 0; }
.st::before { content: ""; position: absolute; right: 3px; bottom: 0; width: 11px; height: 2px; background: #4f86b3; z-index: 1; }
.ui { width: 20px; height: 24px; font: 700 16px "Liberation Sans", sans-serif; display: flex; align-items: center; justify-content: center; }
.ui-b { background: #0a6cbd; color: #fff; }
.ui-w { background: #fff; color: #0a6cbd; border: 2px solid #0a6cbd; }
.tray { display: flex; align-items: center; color: #eee; font-family: "Open Sans", "Noto Sans", sans-serif; font-size: 14px; padding-right: 31px; }
.ty { height: 20px; }
.t-ppl { width: 20px; margin-right: 20px; }
.t-chev { width: 16px; height: 9px; margin-right: 13px; }
.t-bat { width: 20px; height: 11px; margin-right: 11px; }
.t-wifi { width: 18px; height: 18px; margin-right: 11px; }
.t-vol { width: 20px; height: 18px; margin-right: 13px; }
.eng { margin-right: 17px; }
.time { margin-right: 23px; }
.t-note { width: 20px; height: 18px; }
```
